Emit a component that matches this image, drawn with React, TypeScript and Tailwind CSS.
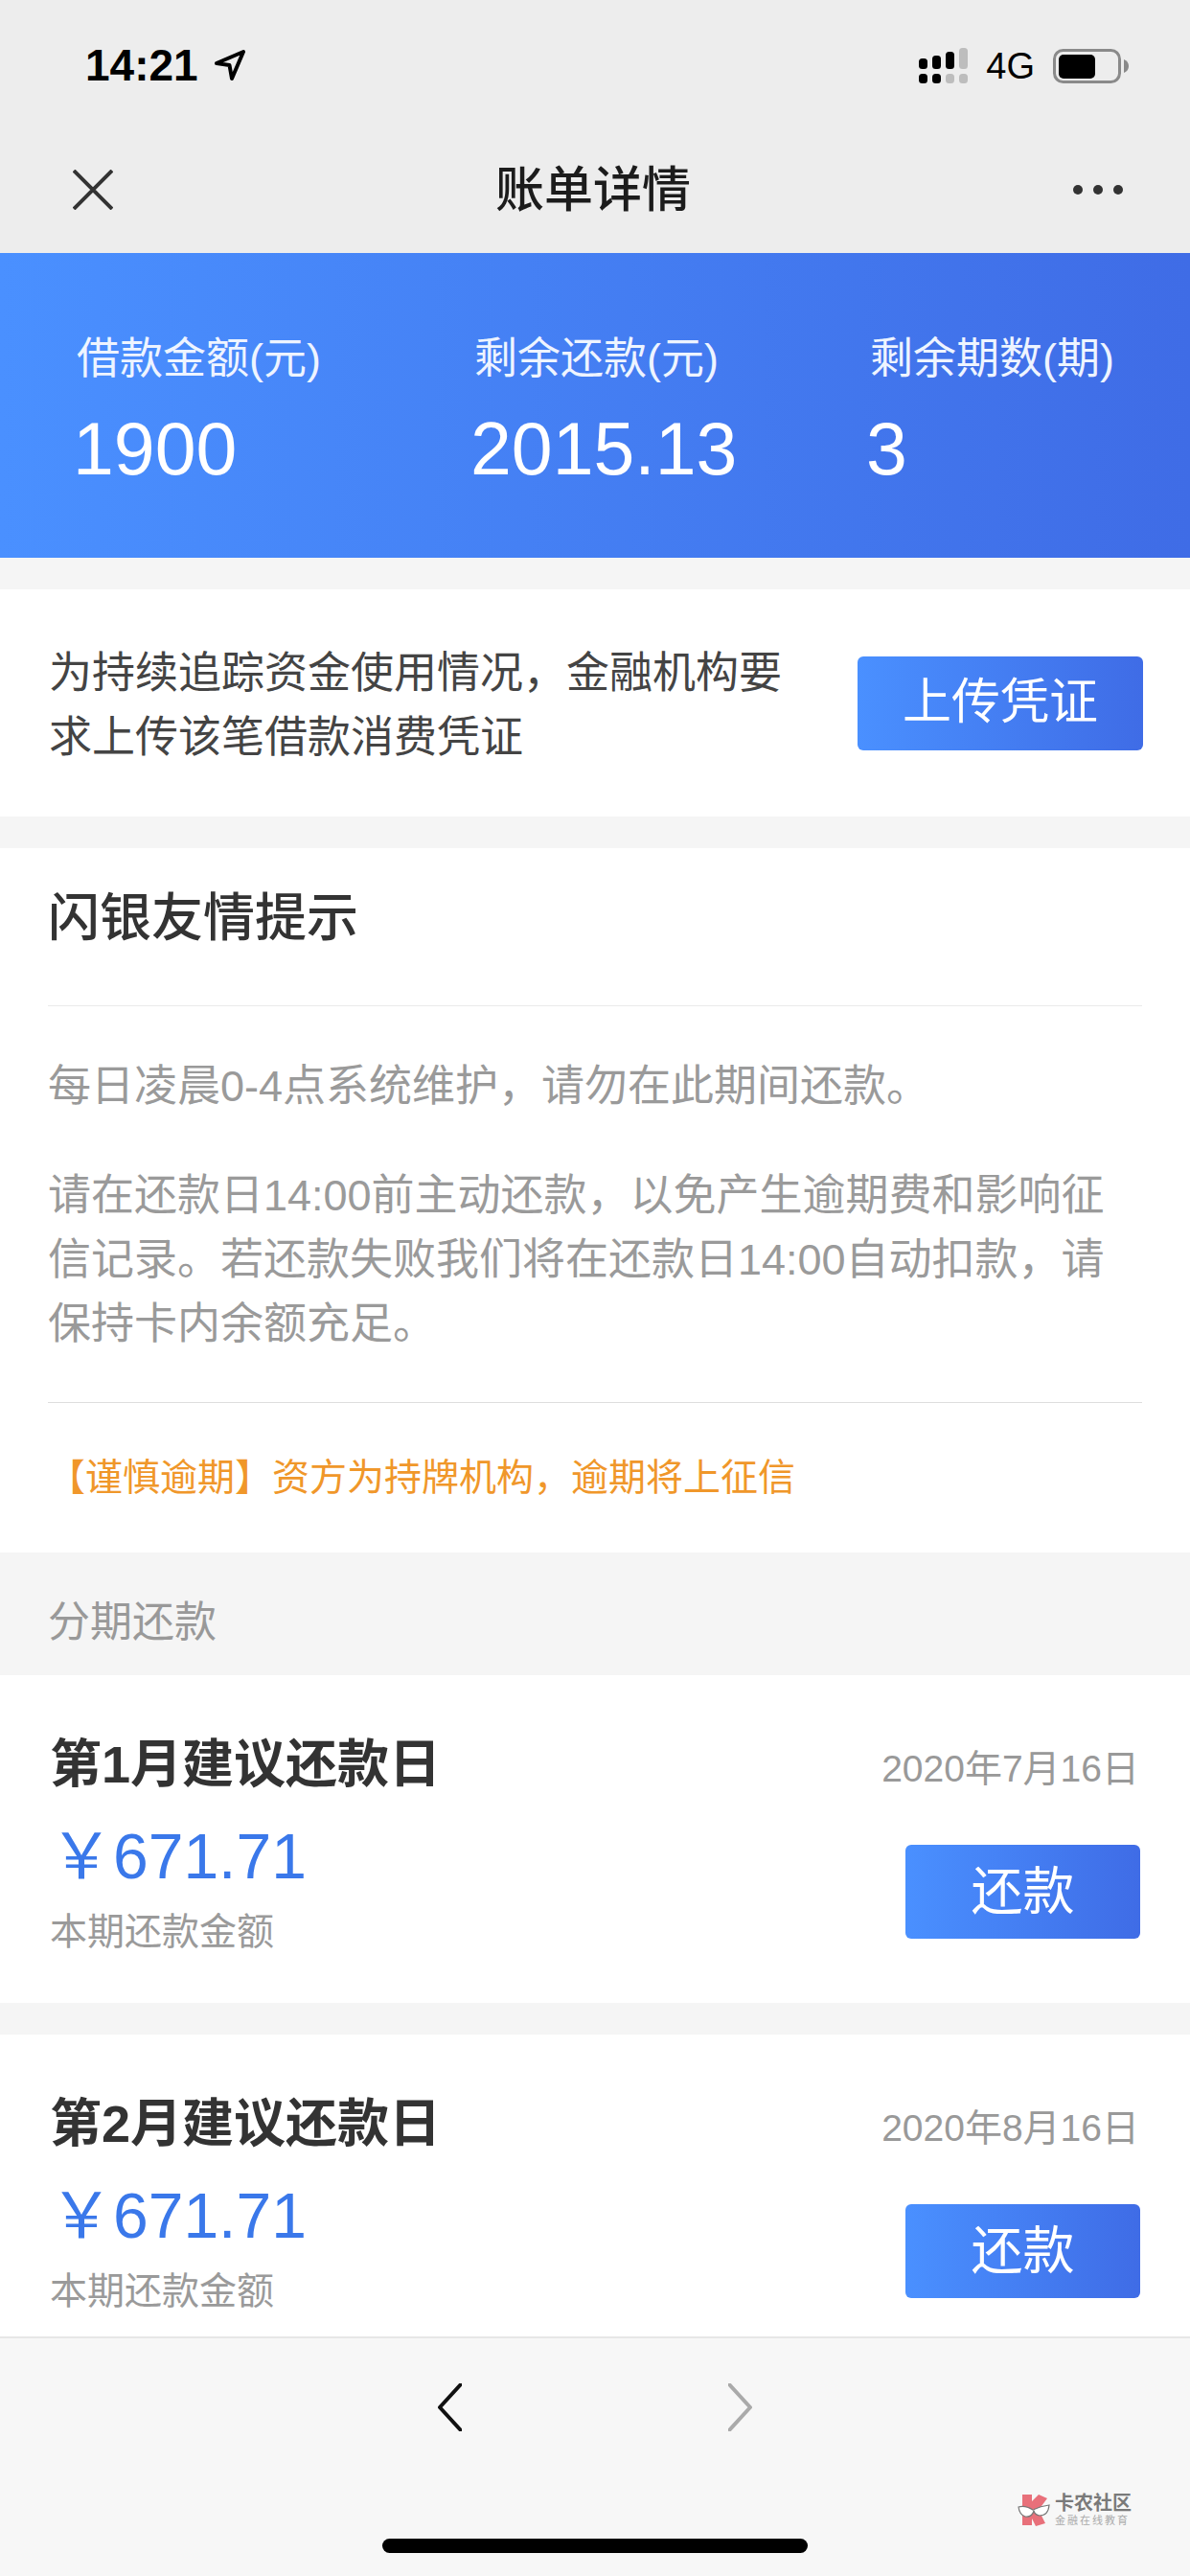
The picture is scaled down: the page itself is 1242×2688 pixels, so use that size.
const stats = [
  { label: '借款金额(元)', value: '1900', width: 'w-[415px]' },
  { label: '剩余还款(元)', value: '2015.13', width: 'w-[413px]' },
  { label: '剩余期数(期)', value: '3', width: 'w-[300px]' },
];

const bills = [
  { title: '第1月建议还款日', date: '2020年7月16日', amount: '671.71' },
  { title: '第2月建议还款日', date: '2020年8月16日', amount: '671.71' },
];

function StatusBar() {
  return (
    <div className="h-[132px] shrink-0 flex items-start justify-between pl-[89px] pr-[64px] pt-[42px]">
      <div className="flex items-center gap-[16px]">
        <span className="text-[46px] leading-[52px] font-bold text-black">14:21</span>
        <svg width="34" height="34" viewBox="0 0 34 34" fill="none">
          <path d="M3 15 L31 3 L19 31 L16.500 17 Z" stroke="#000" strokeWidth="4" strokeLinejoin="round" />
        </svg>
      </div>
      <div className="flex items-center gap-[19px] h-[48px] mt-[3px]">
        <svg width="51" height="38" viewBox="0 0 51 38">
          <rect x="0" y="11" width="9" height="11" rx="3.500" fill="#000" />
          <rect x="14" y="8" width="9" height="14" rx="3.500" fill="#000" />
          <rect x="28" y="4" width="9" height="18" rx="3.500" fill="#000" />
          <rect x="42" y="0" width="9" height="22" rx="3.500" fill="#bdbdbd" />
          <rect x="0" y="27" width="9" height="10" rx="3.500" fill="#000" />
          <rect x="14" y="27" width="9" height="10" rx="3.500" fill="#000" />
          <rect x="28" y="27" width="9" height="10" rx="3.500" fill="#bdbdbd" />
          <rect x="42" y="27" width="9" height="10" rx="3.500" fill="#bdbdbd" />
        </svg>
        <span className="text-[38px] leading-[48px] text-black">4G</span>
        <svg width="79" height="36" viewBox="0 0 79 36">
          <rect x="1.500" y="1.500" width="68" height="33" rx="9" fill="none" stroke="#8a8a8a" strokeWidth="3" />
          <rect x="6" y="6" width="38" height="25" rx="5" fill="#000" />
          <path d="M74 11 Q79 13 79 18 Q79 23 74 25 Z" fill="#8a8a8a" />
        </svg>
      </div>
    </div>
  );
}

function NavBar() {
  return (
    <div className="h-[132px] shrink-0 flex items-center justify-between pl-[76px] pr-[70px]">
      <svg width="42" height="42" viewBox="0 0 42 42">
        <path d="M1 1 L41 41 M41 1 L1 41" stroke="#333" strokeWidth="4" />
      </svg>
      <span className="text-[51px] font-medium text-[#1c1c1c] pt-[2px]">账单详情</span>
      <div className="flex items-center gap-[11px]">
        <span className="w-[10px] h-[10px] rounded-full bg-[#333]" />
        <span className="w-[10px] h-[10px] rounded-full bg-[#333]" />
        <span className="w-[10px] h-[10px] rounded-full bg-[#333]" />
      </div>
    </div>
  );
}

function Banner() {
  return (
    <div className="h-[318px] shrink-0 flex pl-[80px] pt-[81px] bg-linear-to-r from-[#4a90ff] to-[#3f6ce6] text-white">
      {stats.map((s) => (
        <div key={s.label} className={s.width}>
          <div className="text-[45px] leading-[60px] text-[#eef4ff]">{s.label}</div>
          <div className="text-[77px] leading-[90px] mt-[18px] -ml-[4px]">{s.value}</div>
        </div>
      ))}
    </div>
  );
}

function UploadNotice() {
  return (
    <div className="h-[237px] shrink-0 mt-[33px] bg-white flex items-center justify-between pl-[51px] pr-[49px]">
      <p className="text-[45px] leading-[67px] text-[#444] pt-[4px]">
        为持续追踪资金使用情况，金融机构要
        <br />
        求上传该笔借款消费凭证
      </p>
      <button className="w-[298px] h-[98px] rounded-[6px] bg-linear-to-r from-[#4a90ff] to-[#3f6ce6] text-white text-[51px]">
        上传凭证
      </button>
    </div>
  );
}

function Tips() {
  return (
    <div className="mt-[33px] shrink-0 bg-white px-[50px] h-[735px]">
      <div className="h-[165px] border-b border-[#eaeaea] flex items-center pb-[18px]">
        <span className="text-[54px] font-medium text-[#333]">闪银友情提示</span>
      </div>
      <div className="h-[414px] border-b border-[#dedede] pt-[50px] text-[45px] leading-[67px] text-[#9a9a9a]">
        <p>每日凌晨0-4点系统维护，请勿在此期间还款。</p>
        <p className="mt-[47px]">
          请在还款日14:00前主动还款，以免产生逾期费和影响征
          <br />
          信记录。若还款失败我们将在还款日14:00自动扣款，请
          <br />
          保持卡内余额充足。
        </p>
      </div>
      <div className="h-[156px] flex items-start pt-[51px] text-[39px] leading-[54px] text-[#f0972a]">
        【谨慎逾期】资方为持牌机构，逾期将上征信
      </div>
    </div>
  );
}

function BillCard({ title, date, amount }: { title: string; date: string; amount: string }) {
  return (
    <div className="h-[342px] shrink-0 bg-white mb-[33px] pl-[52px] pr-[52px] pt-[58px] flex justify-between">
      <div>
        <div className="text-[54px] leading-[70px] font-bold text-[#333]">{title}</div>
        <div className="text-[66px] leading-[80px] mt-[21px] text-[#3a78ea]">￥{amount}</div>
        <div className="text-[39px] leading-[50px] mt-[14px] text-[#9a9a9a]">本期还款金额</div>
      </div>
      <div className="flex flex-col items-end">
        <div className="text-[39px] leading-[50px] mt-[15px] mr-[1px] text-[#999]">{date}</div>
        <button className="w-[245px] h-[98px] mt-[54px] rounded-[6px] bg-linear-to-r from-[#4a90ff] to-[#3f6ce6] text-white text-[54px]">
          还款
        </button>
      </div>
    </div>
  );
}

function BottomBar() {
  return (
    <div className="relative h-[250px] shrink-0 bg-[#f7f7f7] border-t-2 border-[#e6e6e6]">
      <div className="flex justify-center gap-[278px] pt-[47px]">
        <svg width="25" height="50" viewBox="0 0 25 50" fill="none">
          <path d="M24 1 L2 25 L24 49" stroke="#111" strokeWidth="4" strokeLinecap="round" strokeLinejoin="round" />
        </svg>
        <svg width="25" height="50" viewBox="0 0 25 50" fill="none">
          <path d="M1 1 L23 25 L1 49" stroke="#aaa" strokeWidth="4" strokeLinecap="round" strokeLinejoin="round" />
        </svg>
      </div>
      {/* watermark */}
      <div className="absolute left-[1062px] top-[162px] flex gap-[5px] items-start">
        <svg width="34" height="34" viewBox="0 0 34 34">
          <path d="M5 1 L15 1 L15 8 L22 1 L31 5 L22 17 L29 31 L19 34 L15 26 L15 33 L5 33 Z" fill="#e8707a" />
          <path d="M1 14 Q8 12 16 17 Q24 13 33 12 Q32 23 23 23 Q18 22 17 18 Q15 25 8 24 Q2 22 1 14 Z" fill="#fff" stroke="#777" strokeWidth="1.200" />
        </svg>
        <div className="flex flex-col">
          <span className="text-[20px] leading-[21px] font-bold text-[#7a7a7a] whitespace-nowrap">卡农社区</span>
          <span className="text-[11px] leading-[14px] text-[#aaa] tracking-[2px] whitespace-nowrap">金融在线教育</span>
        </div>
      </div>
      {/* home indicator */}
      <div className="absolute left-[399px] top-[209px] w-[444px] h-[15px] rounded-full bg-black" />
    </div>
  );
}

export default function App() {
  return (
    <div className="w-[1242px] h-[2688px] overflow-hidden flex flex-col bg-[#f5f5f5] font-['Liberation_Sans','Noto_Sans_CJK_SC',sans-serif]">
      <div className="bg-[#ededed] shrink-0">
        <StatusBar />
        <NavBar />
      </div>
      <Banner />
      <div className="flex-1 min-h-0 overflow-hidden flex flex-col">
        <UploadNotice />
        <Tips />
        <div className="h-[128px] shrink-0 flex items-center pl-[50px] pt-[18px] text-[44px] text-[#999]">分期还款</div>
        {bills.map((b) => (
          <BillCard key={b.title} {...b} />
        ))}
      </div>
      <BottomBar />
    </div>
  );
}
